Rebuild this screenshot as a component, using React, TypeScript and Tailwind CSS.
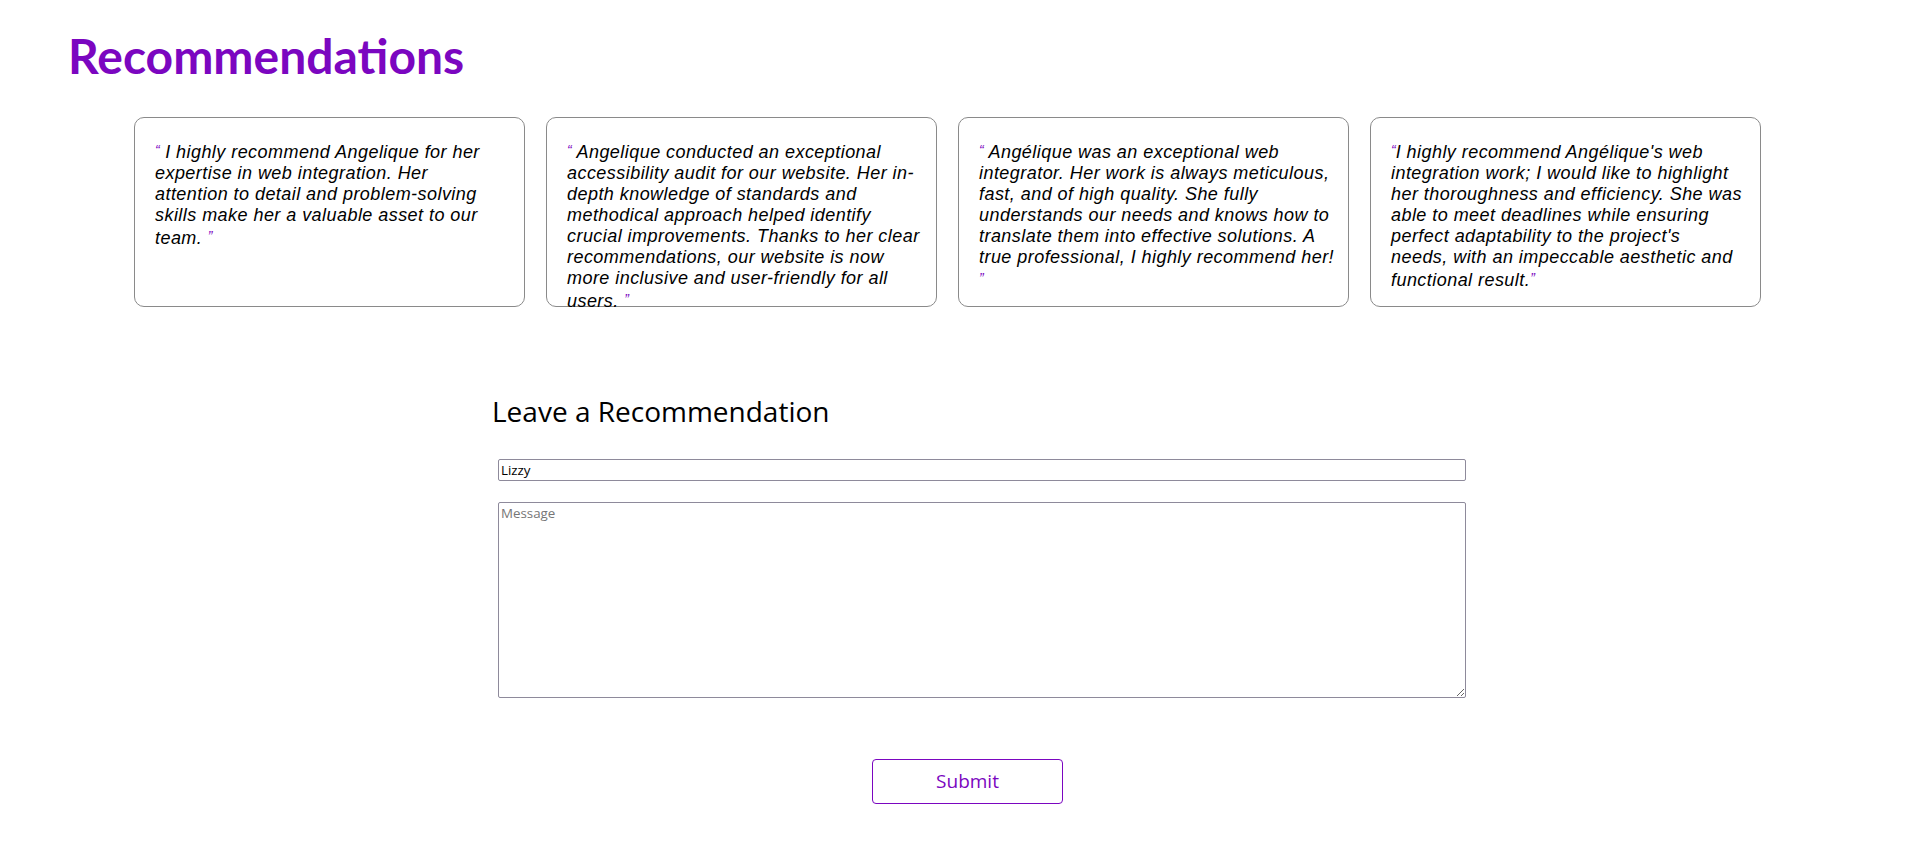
import React from "react";

const PURPLE = "#7b06c0";

const cards: string[][] = [
  [
    "I highly recommend Angelique for her",
    "expertise in web integration. Her",
    "attention to detail and problem-solving",
    "skills make her a valuable asset to our",
    "team.",
  ],
  [
    "Angelique conducted an exceptional",
    "accessibility audit for our website. Her in-",
    "depth knowledge of standards and",
    "methodical approach helped identify",
    "crucial improvements. Thanks to her clear",
    "recommendations, our website is now",
    "more inclusive and user-friendly for all",
    "users.",
  ],
  [
    "Angélique was an exceptional web",
    "integrator. Her work is always meticulous,",
    "fast, and of high quality. She fully",
    "understands our needs and knows how to",
    "translate them into effective solutions. A",
    "true professional, I highly recommend her!",
    "",
  ],
  [
    "I highly recommend Angélique's web",
    "integration work; I would like to highlight",
    "her thoroughness and efficiency. She was",
    "able to meet deadlines while ensuring",
    "perfect adaptability to the project's",
    "needs, with an impeccable aesthetic and",
    "functional result.",
  ],
];

function Quote({ ch }: { ch: string }) {
  return <span className="text-[14px] text-[#7b06c0] align-[3px] italic tracking-normal">{ch}</span>;
}

function Card({ lines, idx }: { lines: string[]; idx: number }) {
  const tight = idx === 3;
  return (
    <div className="w-[391px] h-[190px] border border-[#8a8a8a] rounded-[10px] pl-[20px] pr-[4px] pt-[22px] bg-white">
      <p
        className="italic text-[18px] leading-[21px] tracking-[0.45px] text-black whitespace-nowrap"
        style={{ fontFamily: '"Liberation Sans", Arial, sans-serif' }}
      >
        {lines.map((l, i) => {
          const first = i === 0;
          const last = i === lines.length - 1;
          return (
            <React.Fragment key={i}>
              {first && <Quote ch="“" />}
              {first && !tight ? " " : ""}
              {l}
              {last && (l.length > 0 && !tight ? " " : "")}
              {last && <Quote ch="”" />}
              {!last && <br />}
            </React.Fragment>
          );
        })}
      </p>
    </div>
  );
}

export default function App() {
  return (
    <div className="min-h-[843px] bg-white pt-[28px]" style={{ fontFamily: '"Open Sans", "Noto Sans", sans-serif' }}>
      <h1
        className="ml-[68px] text-[48px] leading-[56px] font-bold text-[#7b06c0]"
        style={{ fontFamily: 'Lato, "Open Sans", sans-serif', color: PURPLE }}
      >
        Recommendations
      </h1>

      <div className="mt-[33px] ml-[134px] flex gap-[21px]">
        {cards.map((c, i) => (
          <Card key={i} lines={c} idx={i} />
        ))}
      </div>

      <div className="mt-[87px] ml-[492px] w-[974px] flex flex-col">
        <h2 className="text-[28px] leading-[34px] text-black font-normal">Leave a Recommendation</h2>
        <div className="ml-[6px] mt-[31px] flex flex-col">
          <input
            type="text"
            defaultValue="Lizzy"
            className="w-[968px] h-[22px] border border-[#8e8a9b] rounded-[2px] px-[2px] text-[13.33px] text-black outline-none"
            style={{ fontFamily: '"Open Sans", "Noto Sans", sans-serif' }}
          />
          <textarea
            placeholder="Message"
            className="mt-[21px] w-[968px] h-[196px] border border-[#8e8a9b] rounded-[2px] px-[2px] py-[1px] text-[13.33px] leading-[18px] text-black placeholder:text-[#767676] outline-none"
            style={{ fontFamily: '"Open Sans", "Noto Sans", sans-serif' }}
          />
        </div>
        <div className="ml-[380px] mt-[61px]">
          <button
            type="button"
            className="w-[191px] h-[45px] border border-[#7b06c0] rounded-[4px] bg-white text-[19px] text-[#7b06c0]"
          >
            Submit
          </button>
        </div>
      </div>
    </div>
  );
}
